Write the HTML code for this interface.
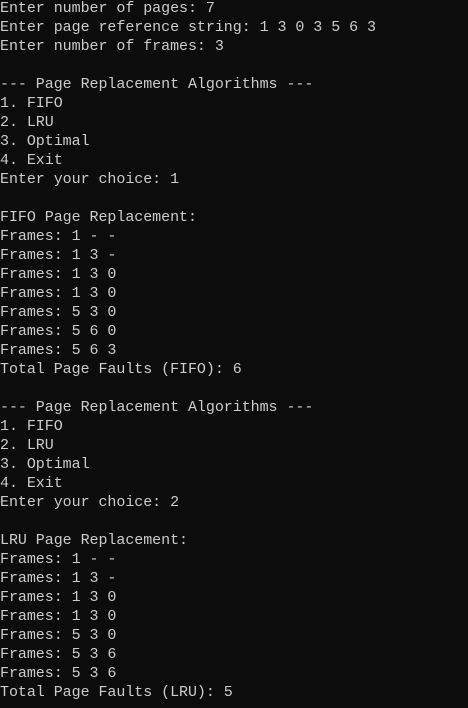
<!DOCTYPE html>
<html><head><meta charset="utf-8"><style>
html,body{margin:0;padding:0;background:#0c0c0c;width:468px;height:708px;overflow:hidden}
pre{margin:0;position:absolute;left:0;top:-1px;font-family:"Liberation Mono",monospace;font-size:15px;letter-spacing:-0.05px;line-height:19px;color:#cccccc;white-space:pre}
</style></head><body><pre>Enter number of pages: 7
Enter page reference string: 1 3 0 3 5 6 3
Enter number of frames: 3

--- Page Replacement Algorithms ---
1. FIFO
2. LRU
3. Optimal
4. Exit
Enter your choice: 1

FIFO Page Replacement:
Frames: 1 - -
Frames: 1 3 -
Frames: 1 3 0
Frames: 1 3 0
Frames: 5 3 0
Frames: 5 6 0
Frames: 5 6 3
Total Page Faults (FIFO): 6

--- Page Replacement Algorithms ---
1. FIFO
2. LRU
3. Optimal
4. Exit
Enter your choice: 2

LRU Page Replacement:
Frames: 1 - -
Frames: 1 3 -
Frames: 1 3 0
Frames: 1 3 0
Frames: 5 3 0
Frames: 5 3 6
Frames: 5 3 6
Total Page Faults (LRU): 5</pre></body></html>
